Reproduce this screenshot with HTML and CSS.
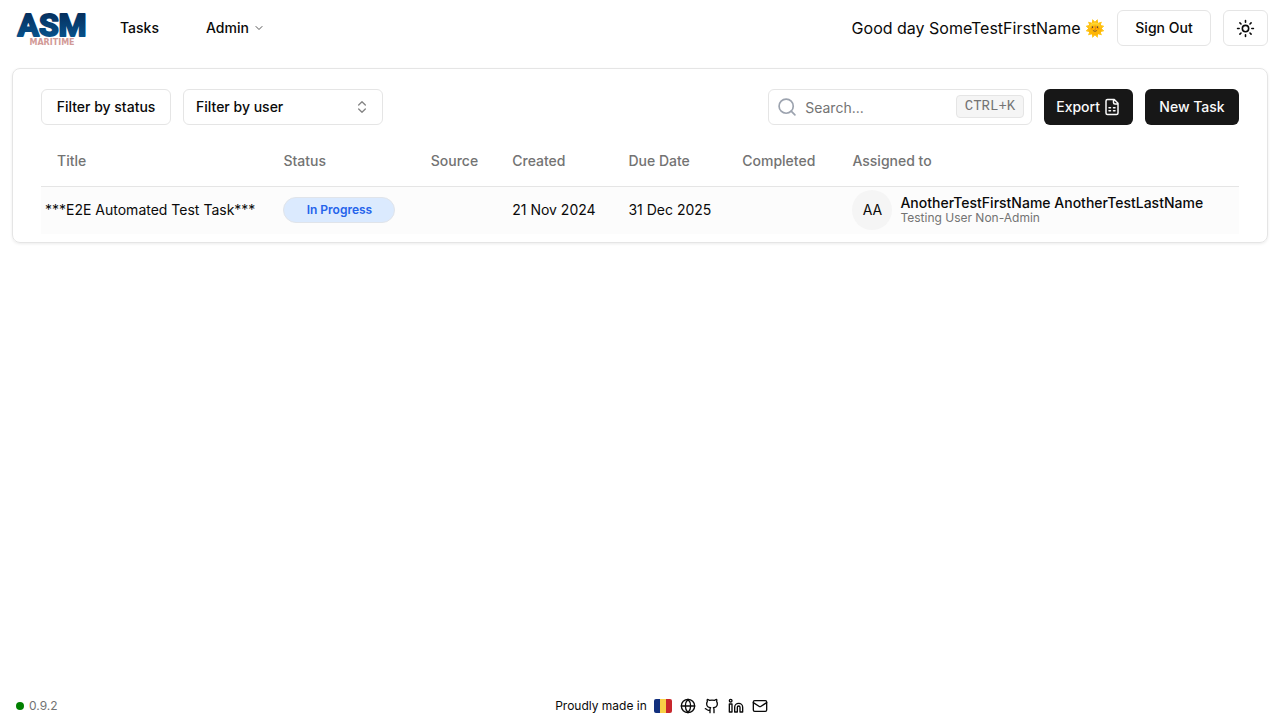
FILE: index.html
```html
<!DOCTYPE html>
<html lang="en">
<head>
<meta charset="utf-8">
<meta name="viewport" content="width=device-width, initial-scale=1">
<title>Tasks</title>
<link rel="stylesheet" href="styles.css">
</head>
<body>
<header class="topbar">
  <a class="logo" href="#" aria-label="ASM Maritime">
    <svg width="80" height="40" viewBox="0 0 80 40">
      <defs><linearGradient id="navy" x1="0" y1="0" x2="0" y2="1"><stop offset="0.2" stop-color="#06305f"/><stop offset="0.8" stop-color="#075089"/></linearGradient></defs>
      <text class="logo-name" x="40" y="28" text-anchor="middle" fill="url(#navy)" stroke="url(#navy)">ASM</text>
      <text class="logo-sub" x="40" y="37" text-anchor="middle">MARITIME</text>
    </svg>
  </a>
  <nav class="nav">
    <a class="nav-link" href="#">Tasks</a>
    <button class="nav-link" type="button">Admin
      <svg class="chevron" width="12" height="12" viewBox="0 0 24 24"><path d="m6 9 6 6 6-6"/></svg>
    </button>
  </nav>
  <div class="account">
    <span class="greeting">Good day SomeTestFirstName 🌞</span>
    <button class="btn btn-signout" type="button">Sign Out</button>
    <button class="btn" type="button" aria-label="Theme">
      <svg class="icon" width="19" height="19" viewBox="0 0 24 24"><circle cx="12" cy="12" r="4"/><path d="M12 2v2M12 20v2M4.930 4.930l1.410 1.410M17.660 17.660l1.410 1.410M2 12h2M20 12h2M6.340 17.660l-1.410 1.410M19.070 4.930l-1.410 1.410"/></svg>
    </button>
  </div>
</header>

<main class="card">
  <div class="toolbar">
    <button class="btn btn-status" type="button">Filter by status</button>
    <button class="btn btn-user" type="button">Filter by user
      <svg class="updown" width="16" height="16" viewBox="0 0 24 24"><path d="m7 15 5 5 5-5M7 9l5-5 5 5"/></svg>
    </button>
    <label class="search">
      <svg class="search-icon" width="20" height="20" viewBox="0 0 24 24"><circle cx="11" cy="11" r="8.500"/><path d="m21.500 21.500-4.500-4.500"/></svg>
      <input class="search-input" type="text" placeholder="Search..." aria-label="Search">
      <kbd class="kbd">CTRL+K</kbd>
    </label>
    <button class="btn btn-dark" type="button">Export
      <svg class="icon" width="18" height="18" viewBox="0 0 24 24"><path d="M15 2H6a2 2 0 0 0-2 2v16a2 2 0 0 0 2 2h12a2 2 0 0 0 2-2V7zM14 2v4a2 2 0 0 0 2 2h4M8 13h2M14 13h2M8 17h2M14 17h2"/></svg>
    </button>
    <button class="btn btn-dark btn-new" type="button">New Task</button>
  </div>

  <table class="tasks">
    <colgroup><col class="c-title"><col class="c-status"><col class="c-source"><col class="c-created"><col class="c-due"><col class="c-completed"><col></colgroup>
    <thead>
      <tr><th>Title</th><th>Status</th><th>Source</th><th>Created</th><th>Due Date</th><th>Completed</th><th>Assigned to</th></tr>
    </thead>
    <tbody>
      <tr>
        <td class="title">***E2E Automated Test Task***</td>
        <td><span class="badge">In Progress</span></td>
        <td></td>
        <td>21 Nov 2024</td>
        <td>31 Dec 2025</td>
        <td></td>
        <td>
          <div class="person">
            <span class="avatar">AA</span>
            <div class="person-text"><span class="person-name">AnotherTestFirstName AnotherTestLastName</span><span class="person-role">Testing User Non-Admin</span></div>
          </div>
        </td>
      </tr>
    </tbody>
  </table>
</main>

<footer class="footer">
  <div class="version"><span class="dot"></span>0.9.2</div>
  <div class="made">
    <span>Proudly made in</span>
    <svg class="flag" width="18" height="14" viewBox="0 0 18 14" role="img" aria-label="Romania"><path fill="#12307e" d="M2 0h4v14H2a2 2 0 0 1-2-2V2a2 2 0 0 1 2-2z"/><path fill="#f8d147" d="M6 0h6v14H6z"/><path fill="#c8272d" d="M12 0h4a2 2 0 0 1 2 2v10a2 2 0 0 1-2 2h-4z"/></svg>
    <div class="social">
      <a href="#" aria-label="Website"><svg class="icon" width="16" height="16" viewBox="0 0 24 24"><circle cx="12" cy="12" r="10"/><path d="M12 2a14.500 14.500 0 0 0 0 20 14.500 14.500 0 0 0 0-20M2 12h20"/></svg></a>
      <a href="#" aria-label="GitHub"><svg class="icon" width="16" height="16" viewBox="0 0 24 24"><path d="M15 22v-4a4.800 4.800 0 0 0-1-3.500c3 0 6-2 6-5.500.080-1.250-.270-2.480-1-3.500.280-1.150.280-2.350 0-3.500 0 0-1 0-3 1.500-2.640-.5-5.360-.5-8 0C6 2 5 2 5 2c-.300 1.150-.300 2.350 0 3.500A5.400 5.400 0 0 0 4 9c0 3.500 3 5.500 6 5.500-.390.490-.680 1.050-.850 1.650-.170.600-.220 1.230-.150 1.850v4M9 18c-4.510 2-5-2-7-2"/></svg></a>
      <a href="#" aria-label="LinkedIn"><svg class="icon" width="16" height="16" viewBox="0 0 24 24"><path d="M16 8a6 6 0 0 1 6 6v7h-4v-7a2 2 0 0 0-4 0v7h-4v-7a6 6 0 0 1 6-6zM2 9h4v12H2z"/><circle cx="4" cy="4" r="2"/></svg></a>
      <a href="#" aria-label="Email"><svg class="icon" width="16" height="16" viewBox="0 0 24 24"><rect x="2" y="4" width="20" height="16" rx="2"/><path d="m22 7-8.970 5.700a1.940 1.940 0 0 1-2.060 0L2 7"/></svg></a>
    </div>
  </div>
</footer>
</body>
</html>
```
FILE: styles.css
```css
* { box-sizing: border-box; }
body {
  margin: 0;
  min-height: 100vh;
  display: flex;
  flex-direction: column;
  background: #fff;
  color: #0a0a0a;
  font-family: Inter, "Liberation Sans", sans-serif;
  font-size: 14px;
  line-height: 20px;
}
button, input { font: inherit; color: inherit; }
a { color: inherit; text-decoration: none; }
svg { display: block; flex: none; overflow: visible; }
.icon, .chevron, .updown, .search-icon {
  fill: none;
  stroke: currentColor;
  stroke-width: 2;
  stroke-linecap: round;
  stroke-linejoin: round;
}

.topbar { display: flex; align-items: center; height: 56px; padding: 0 12px; }
.logo-name { font: 700 32px Roboto, sans-serif; stroke-width: 2; stroke-linejoin: round; }
.logo-sub { font: bold 8px "DejaVu Sans", sans-serif; fill: #d29a97; }
.nav { display: flex; align-items: center; gap: 15px; margin-left: 12px; }
.nav-link {
  display: flex;
  align-items: center;
  gap: 4px;
  height: 36px;
  padding: 0 16px;
  border: 0;
  background: none;
  font-weight: 500;
}
.chevron { color: #555; }
.account { display: flex; align-items: center; gap: 12px; margin-left: auto; }
.greeting { font-size: 16px; line-height: 24px; }

.btn {
  display: flex;
  align-items: center;
  justify-content: center;
  gap: 4px;
  height: 36px;
  padding: 0 12px;
  border: 1px solid #e5e5e5;
  border-radius: 6px;
  background: #fff;
  font-weight: 500;
  white-space: nowrap;
}
.btn-status { min-width: 130px; }
.btn-user { width: 200px; justify-content: space-between; }
.btn-dark { gap: 3px; border: 0; background: #171717; color: #fafafa; }
.btn-signout, .btn-new { min-width: 94px; }
.updown { color: #858585; }

.card {
  margin: 12px 12px 0;
  padding: 20px 28px 8px;
  border: 1px solid #e5e5e5;
  border-radius: 8px;
  box-shadow: 0 1px 3px rgba(0, 0, 0, 0.08);
}
.toolbar { display: flex; gap: 12px; margin-bottom: 12px; }
.search {
  display: flex;
  align-items: center;
  gap: 8px;
  width: 264px;
  height: 36px;
  margin-left: auto;
  padding: 0 7px 0 8px;
  border: 1px solid #e5e5e5;
  border-radius: 6px;
}
.search-icon { color: #9ca3af; }
.search-input { flex: 1; min-width: 0; padding: 2px 0 0; border: 0; outline: 0; background: none; }
.search-input::placeholder { color: #737373; opacity: 1; }
.kbd {
  margin-bottom: 2px;
  padding: 0 8px;
  border: 1px solid #e5e5e5;
  border-radius: 4px;
  background: #f5f5f5;
  color: #737373;
  font: 14px/21px "Liberation Mono", monospace;
}

.tasks { width: 100%; table-layout: fixed; border-collapse: collapse; }
.c-title { width: 18.9%; }
.c-status { width: 12.3%; }
.c-source { width: 6.8%; }
.c-created { width: 9.7%; }
.c-due { width: 9.5%; }
.c-completed { width: 9.2%; }
.tasks th { height: 49px; padding: 0 0 0 16px; color: #737373; font-weight: 500; text-align: left; }
.tasks thead tr { border-bottom: 1px solid #e5e5e5; }
.tasks td { height: 48px; padding: 0 0 0 16px; white-space: nowrap; }
.tasks td.title { padding-left: 4px; }
.tasks tbody tr { background: #fcfcfc; }
.badge {
  display: block;
  width: 112px;
  border: 1px solid #e0e4ea;
  border-radius: 13px;
  background: #dbeafe;
  color: #2563eb;
  font-size: 12px;
  line-height: 24px;
  font-weight: 600;
  text-align: center;
}
.person { display: flex; align-items: center; gap: 8px; }
.avatar {
  display: flex;
  align-items: center;
  justify-content: center;
  width: 40px;
  height: 40px;
  border-radius: 50%;
  background: #f5f5f5;
}
.person-text { display: flex; flex-direction: column; }
.person-name { font-weight: 500; line-height: 16px; }
.person-role { color: #737373; font-size: 12px; line-height: 14px; }

.footer {
  display: grid;
  grid-template-columns: 1fr auto 1fr;
  align-items: center;
  height: 28px;
  margin-top: auto;
  padding: 0 16px;
  font-size: 12px;
  line-height: 16px;
}
.version { display: flex; align-items: center; gap: 5px; color: #737373; }
.dot { width: 8px; height: 8px; border-radius: 50%; background: #008000; }
.made { display: flex; align-items: center; gap: 4px; margin-left: 43px; }
.flag { margin-left: 3px; }
.social { display: flex; gap: 8px; margin-left: 4px; }
```
